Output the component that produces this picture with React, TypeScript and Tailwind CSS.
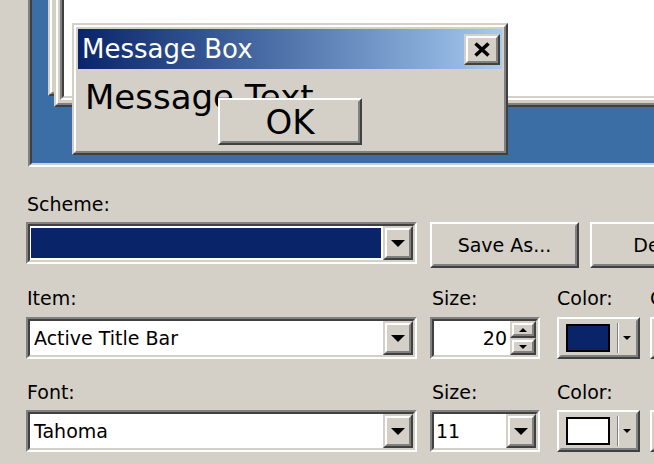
import React from "react";

const FONT = "font-['DejaVu_Sans',sans-serif]";

type P = { className?: string; innerClassName?: string; children?: React.ReactNode };

function Raised({ className = "", innerClassName = "", children }: P) {
  return (
    <div className={`border-2 border-t-white border-l-white border-b-[#404040] border-r-[#404040] bg-[#d4d0c8] ${className}`}>
      <div className={`h-full w-full border-2 border-t-[#d4d0c8] border-l-[#d4d0c8] border-b-[#808080] border-r-[#808080] ${innerClassName}`}>
        {children}
      </div>
    </div>
  );
}

function Frame({ className = "", innerClassName = "", children }: P) {
  return (
    <div className={`border-2 border-t-[#d4d0c8] border-l-[#d4d0c8] border-b-[#404040] border-r-[#404040] bg-[#d4d0c8] ${className}`}>
      <div className={`h-full w-full border-2 border-t-white border-l-white border-b-[#808080] border-r-[#808080] ${innerClassName}`}>
        {children}
      </div>
    </div>
  );
}

function Sunken({ className = "", innerClassName = "", children }: P) {
  return (
    <div className={`border-2 border-t-[#808080] border-l-[#808080] border-b-white border-r-white ${className}`}>
      <div className={`h-full w-full border-2 border-t-[#404040] border-l-[#404040] border-b-[#d4d0c8] border-r-[#d4d0c8] ${innerClassName}`}>
        {children}
      </div>
    </div>
  );
}

function DownArrow({ w = 14, h = 7 }: { w?: number; h?: number }) {
  return (
    <svg width={w} height={h} viewBox={`0 0 ${w} ${h}`}>
      <polygon points={`0,0 ${w},0 ${w / 2},${h}`} fill="black" />
    </svg>
  );
}

function UpArrow({ w = 8, h = 4 }: { w?: number; h?: number }) {
  return (
    <svg width={w} height={h} viewBox={`0 0 ${w} ${h}`}>
      <polygon points={`0,${h} ${w},${h} ${w / 2},0`} fill="black" />
    </svg>
  );
}

function DropBtn() {
  return (
    <Frame className="w-[30px] h-full shrink-0" innerClassName="flex items-center justify-center">
      <DownArrow />
    </Frame>
  );
}

function Combo({ className = "", children }: P) {
  return (
    <Sunken className={`h-[42px] ${className}`} innerClassName="flex bg-white">
      <div className="flex-1 min-w-0 h-full">{children}</div>
      <DropBtn />
    </Sunken>
  );
}

function Label({ children, className = "" }: P) {
  return <div className={`text-[19px] leading-[24px] text-black whitespace-nowrap ${className}`}>{children}</div>;
}

function ColorBtn({ color }: { color: string }) {
  return (
    <Raised className="w-[83px] h-[42px]" innerClassName="flex items-center pl-[5px]">
      <div className={`w-[44px] h-[28px] border-2 border-black ${color}`} />
      <div className="ml-[7px] w-[2px] h-[30px] border-l border-l-[#808080] border-r border-r-white" />
      <div className="ml-[4px]">
        <DownArrow w={8} h={4} />
      </div>
    </Raised>
  );
}

export default function App() {
  return (
    <div className={`w-[654px] h-[464px] overflow-hidden bg-[#d4d0c8] ${FONT}`}>
      <div className="w-[900px]">
        {/* Preview */}
        <div className="ml-[28px] w-[700px] border-l-2 border-l-[#808080] border-b-2 border-b-white">
          <div className="relative h-[165px] overflow-hidden bg-[#3a6ea5] border-l-2 border-l-[#404040] border-b-2 border-b-[#d4d0c8]">
            {/* Inactive window */}
            <Frame className="absolute left-[16px] top-[-60px] w-[700px] h-[156px]" />
            {/* Active window */}
            <Frame className="absolute left-[22px] top-[-60px] w-[700px] h-[167px]" innerClassName="p-[2px] pb-[3px]">
              <Sunken className="h-full" innerClassName="bg-white" />
            </Frame>
            {/* Message box */}
            <Frame className="absolute left-[40px] top-[23px] w-[436px] h-[132px]" innerClassName="relative p-[2px]">
              <div className="h-[40px] flex items-center bg-linear-to-r from-[#0a246a] to-[#a6caf0]">
                <div className="flex-1 pl-[4px] text-[26px] leading-[30px] text-white">Message Box</div>
                <Frame className="mr-[2px] w-[36px] h-[31px]" innerClassName="flex items-center justify-center">
                  <svg width="18" height="15" viewBox="0 0 18 15">
                    <path d="M2.5 1.5 L15.5 13.5 M15.5 1.5 L2.5 13.5" stroke="black" strokeWidth="3.6" />
                  </svg>
                </Frame>
              </div>
              <div className="mt-[8px] pl-[7px] text-[34px] leading-[40px] text-black whitespace-nowrap">Message Text</div>
              <Raised className="absolute left-[142px] top-[71px] w-[144px] h-[47px]" innerClassName="flex items-center justify-center">
                <span className="text-[34px] leading-[40px] text-black">OK</span>
              </Raised>
            </Frame>
          </div>
        </div>

        {/* Scheme */}
        <Label className="mt-[25px] ml-[27px]">Scheme:</Label>
        <div className="mt-[6px] ml-[26px] flex items-start">
          <Combo className="w-[391px]">
            <div className="h-full pl-[1px] py-[2px] pr-[2px]">
              <div className="h-full bg-[#0a246a]" />
            </div>
          </Combo>
          <Raised className="ml-[13px] w-[149px] h-[46px]" innerClassName="flex items-center justify-center text-[19px] text-black">
            Save As...
          </Raised>
          <Raised className="ml-[11px] w-[149px] h-[46px]" innerClassName="flex items-center justify-center text-[19px] text-black">
            Delete
          </Raised>
        </div>

        {/* Item row */}
        <div className="mt-[18px] ml-[26px] flex items-start">
          <div className="w-[391px]">
            <Label className="pl-[1px]">Item:</Label>
            <Combo className="mt-[7px] w-[391px]">
              <div className="h-full flex items-center pl-[4px] text-[19px] text-black whitespace-nowrap">Active Title Bar</div>
            </Combo>
          </div>
          <div className="ml-[13px] w-[110px]">
            <Label className="pl-[2px]">Size:</Label>
            <Sunken className="mt-[7px] h-[42px]" innerClassName="flex bg-white">
              <div className="flex-1 flex items-center justify-end pr-[3px] text-[19px] text-black">20</div>
              <div className="w-[26px] h-full flex flex-col">
                <Frame className="h-1/2" innerClassName="flex items-center justify-center">
                  <UpArrow />
                </Frame>
                <Frame className="h-1/2" innerClassName="flex items-center justify-center">
                  <DownArrow w={8} h={4} />
                </Frame>
              </div>
            </Sunken>
          </div>
          <div className="ml-[17px] w-[83px]">
            <Label>Color:</Label>
            <div className="mt-[7px]">
              <ColorBtn color="bg-[#0a246a]" />
            </div>
          </div>
          <div className="ml-[10px] w-[83px]">
            <Label className="text-[#808080]">Color 2:</Label>
            <div className="mt-[7px]">
              <ColorBtn color="bg-[#a6caf0]" />
            </div>
          </div>
        </div>

        {/* Font row */}
        <div className="mt-[21px] ml-[26px] flex items-start">
          <div className="w-[391px]">
            <Label className="pl-[1px]">Font:</Label>
            <Combo className="mt-[6px] w-[391px]">
              <div className="h-full flex items-center pl-[4px] text-[19px] text-black">Tahoma</div>
            </Combo>
          </div>
          <div className="ml-[13px] w-[110px]">
            <Label className="pl-[2px]">Size:</Label>
            <Combo className="mt-[6px] w-[110px]">
              <div className="h-full flex items-center pl-[2px] text-[19px] text-black">11</div>
            </Combo>
          </div>
          <div className="ml-[17px] w-[83px]">
            <Label>Color:</Label>
            <div className="mt-[6px]">
              <ColorBtn color="bg-white" />
            </div>
          </div>
          <div className="ml-[10px] w-[83px]">
            <Label>&nbsp;</Label>
            <Raised className="mt-[6px] w-[42px] h-[42px]" innerClassName="flex items-center justify-center text-[19px] font-bold">
              B
            </Raised>
          </div>
        </div>
      </div>
    </div>
  );
}
